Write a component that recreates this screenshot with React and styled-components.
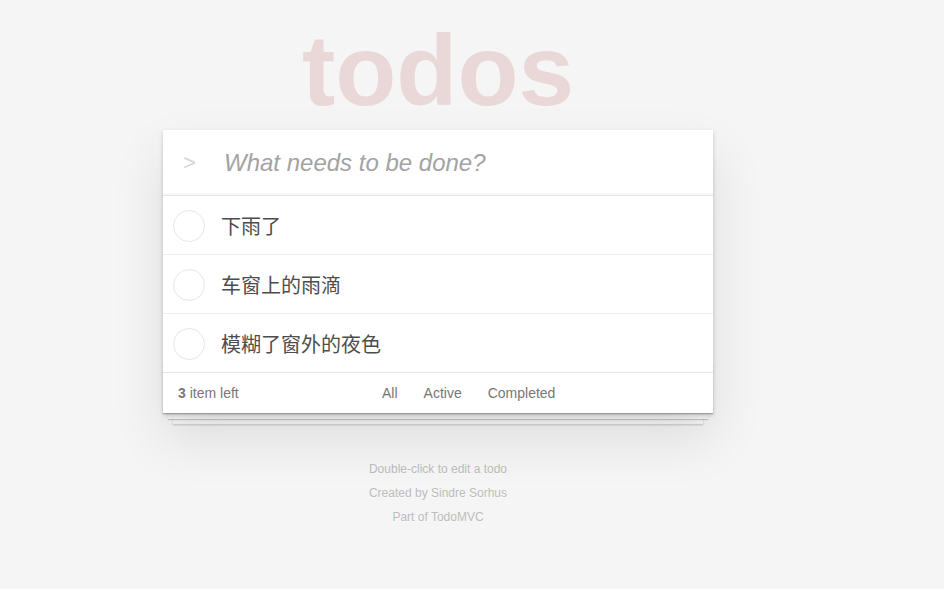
import React from "react";
import styled, { createGlobalStyle } from "styled-components";

const Global = createGlobalStyle`
  html, body { margin: 0; padding: 0; }
  body {
    background: #f5f5f5;
    font-family: "Liberation Sans", Arial, "Noto Sans CJK SC", sans-serif;
    color: #4d4d4d;
  }
`;

const Page = styled.div`
  width: 550px;
  margin-left: 163px;
  padding-top: 20px;
`;

const Title = styled.h1`
  margin: 0;
  height: 100px;
  line-height: 100px;
  font-size: 100px;
  font-weight: bold;
  text-align: center;
  color: rgba(175, 47, 47, 0.15);
  font-family: "Liberation Sans", Arial, sans-serif;
`;

const Card = styled.section`
  margin-top: 10px;
  background: #fff;
  position: relative;
  box-shadow: 0 2px 4px 0 rgba(0, 0, 0, 0.2), 0 25px 50px 0 rgba(0, 0, 0, 0.1);
`;

const Header = styled.header`
  display: flex;
  align-items: center;
  height: 65px;
  box-shadow: inset 0 -2px 1px rgba(0, 0, 0, 0.03);
`;

const Toggle = styled.span`
  flex: 0 0 40px;
  padding-left: 20px;
  font-size: 22px;
  color: #d6d6d6;
  font-family: "Liberation Sans", Arial, sans-serif;
  line-height: 1;
`;

const NewTodo = styled.input`
  flex: 1;
  border: 0;
  outline: none;
  background: transparent;
  padding: 0 16px 0 1px;
  margin: 0;
  font-size: 24px;
  font-style: italic;
  font-family: "Liberation Sans", Arial, sans-serif;
  color: #4d4d4d;
  &::placeholder {
    color: #a3a3a3;
    font-style: italic;
  }
`;

const List = styled.ul`
  list-style: none;
  margin: 0;
  padding: 0;
  border-top: 1px solid #e6e6e6;
`;

const Item = styled.li`
  display: flex;
  align-items: center;
  height: 58px;
  border-bottom: ${(p) => (p.$last ? "none" : "1px solid #ededed")};
`;

const Check = styled.span`
  box-sizing: border-box;
  flex: 0 0 32px;
  height: 32px;
  margin: 2px 0 0 10px;
  border: 1px solid #e6e6e6;
  border-radius: 50%;
`;

const Label = styled.span`
  margin: 4px 0 0 16px;
  font-size: 20px;
  line-height: 1.2;
  color: #4d4d4d;
  font-family: "Liberation Sans", Arial, "Noto Sans CJK SC", sans-serif;
`;

const Footer = styled.footer`
  position: relative;
  display: flex;
  align-items: center;
  height: 20px;
  padding: 10px 15px;
  border-top: 1px solid #e6e6e6;
  color: #777;
  font-size: 14px;
  &::before {
    content: "";
    position: absolute;
    left: 0;
    right: 0;
    bottom: 0;
    height: 50px;
    overflow: hidden;
    z-index: -1;
    box-shadow: 0 1px 1px rgba(0, 0, 0, 0.2), 0 11px 0 -5px #f6f6f6,
      0 12px 1px -5px rgba(0, 0, 0, 0.2), 0 21px 0 -10px #f6f6f6,
      0 22px 2px -10px rgba(0, 0, 0, 0.2);
  }
`;

const Count = styled.span`
  flex: 0 0 196px;
  strong { font-weight: bold; }
`;

const Filters = styled.ul`
  display: flex;
  gap: 10px;
  list-style: none;
  margin: 0;
  padding: 0;
`;

const Filter = styled.a`
  display: inline-block;
  padding: 3px 7px;
  margin: 3px 0;
  color: inherit;
  text-decoration: none;
  border: 1px solid transparent;
  border-radius: 3px;
`;

const Info = styled.footer`
  margin-top: 50px;
  text-align: center;
  color: #bcbcbc;
  font-size: 12px;
  text-shadow: 0 1px 0 rgba(255, 255, 255, 0.5);
  p {
    margin: 0 0 12px;
    line-height: 12px;
  }
`;

const todos = ["下雨了", "车窗上的雨滴", "模糊了窗外的夜色"];

export default function App() {
  return (
    <>
      <Global />
      <Page>
        <Title>todos</Title>
        <Card>
          <Header>
            <Toggle>&gt;</Toggle>
            <NewTodo placeholder="What needs to be done?" />
          </Header>
          <List>
            {todos.map((t, i) => (
              <Item key={t} $last={i === todos.length - 1}>
                <Check />
                <Label>{t}</Label>
              </Item>
            ))}
          </List>
          <Footer>
            <Count>
              <strong>3</strong> item left
            </Count>
            <Filters>
              <li><Filter href="#/">All</Filter></li>
              <li><Filter href="#/active">Active</Filter></li>
              <li><Filter href="#/completed">Completed</Filter></li>
            </Filters>
          </Footer>
        </Card>
        <Info>
          <p>Double-click to edit a todo</p>
          <p>Created by Sindre Sorhus</p>
          <p>Part of TodoMVC</p>
        </Info>
      </Page>
    </>
  );
}
